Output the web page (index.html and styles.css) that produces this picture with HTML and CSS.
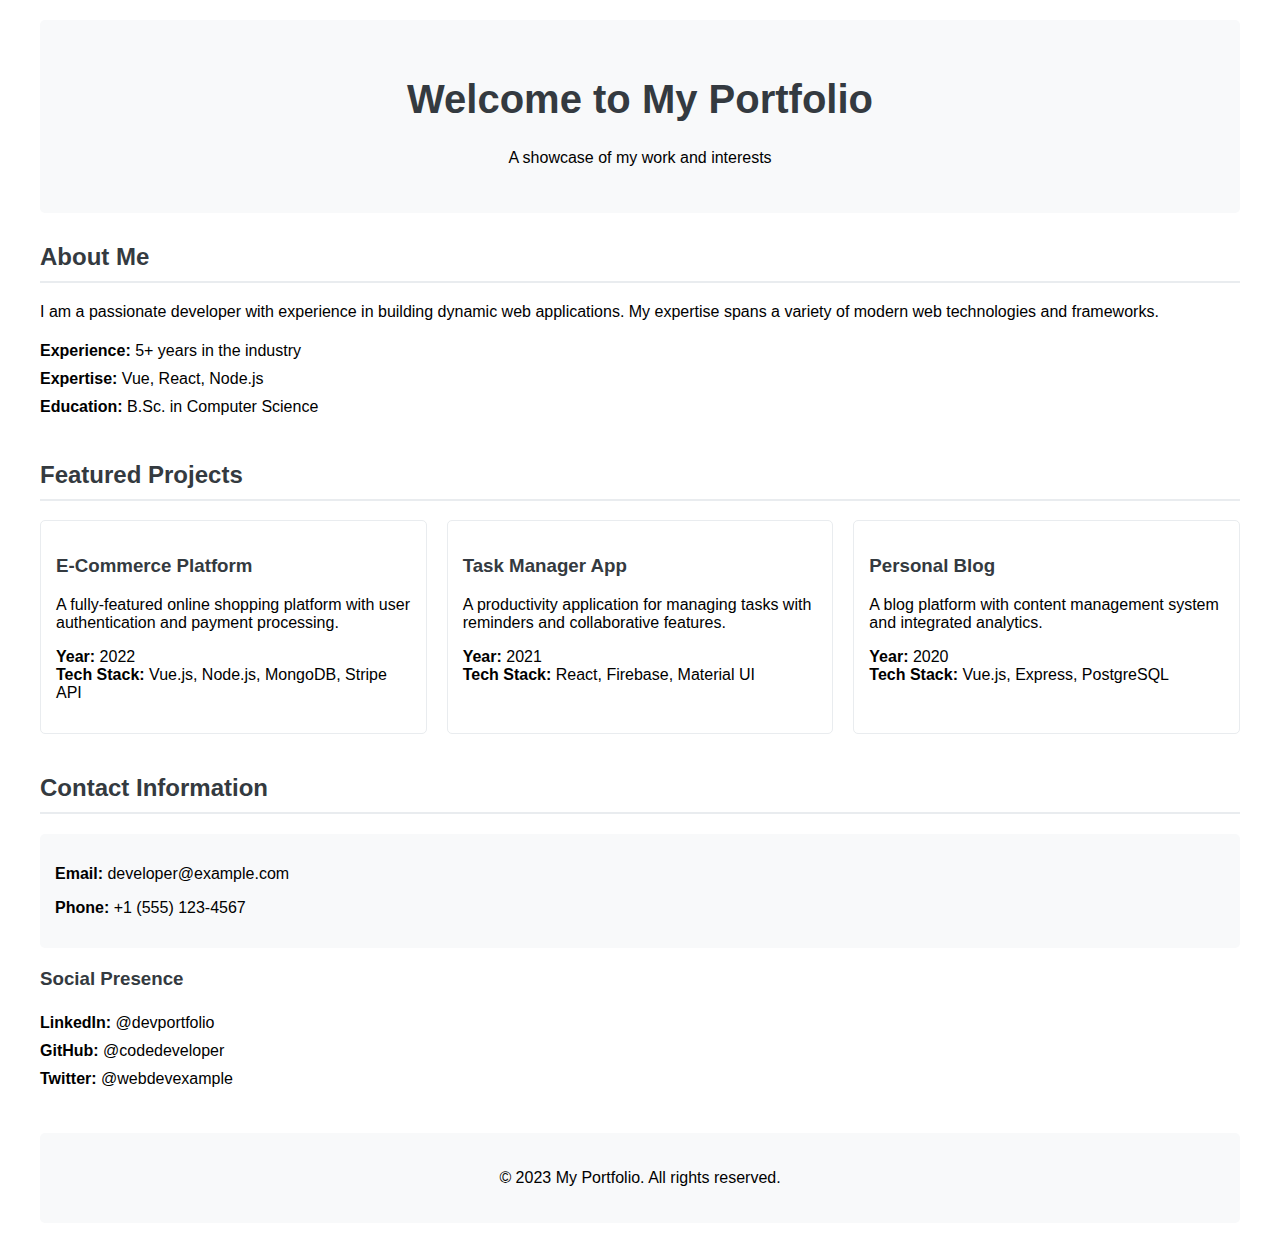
FILE: index.html
```html
<!DOCTYPE html>
<html lang="en">
<head>
<meta charset="utf-8">
<title>My Portfolio</title>
<link rel="stylesheet" href="styles.css">
</head>
<body>
<div class="container">
  <header class="hero">
    <h1>Welcome to My Portfolio</h1>
    <p>A showcase of my work and interests</p>
  </header>

  <section class="section">
    <h2 class="section-title">About Me</h2>
    <p>I am a passionate developer with experience in building dynamic web applications. My expertise spans a variety of modern web technologies and frameworks.</p>
    <ul class="info-list">
      <li><strong>Experience:</strong> 5+ years in the industry</li>
      <li><strong>Expertise:</strong> Vue, React, Node.js</li>
      <li><strong>Education:</strong> B.Sc. in Computer Science</li>
    </ul>
  </section>

  <section class="section">
    <h2 class="section-title">Featured Projects</h2>
    <div class="projects">
      <div class="card">
        <h3>E-Commerce Platform</h3>
        <p>A fully-featured online shopping platform with user authentication and payment processing.</p>
        <div class="meta">
          <div><strong>Year:</strong> 2022</div>
          <div><strong>Tech Stack:</strong> Vue.js, Node.js, MongoDB, Stripe API</div>
        </div>
      </div>
      <div class="card">
        <h3>Task Manager App</h3>
        <p>A productivity application for managing tasks with reminders and collaborative features.</p>
        <div class="meta">
          <div><strong>Year:</strong> 2021</div>
          <div><strong>Tech Stack:</strong> React, Firebase, Material UI</div>
        </div>
      </div>
      <div class="card">
        <h3>Personal Blog</h3>
        <p>A blog platform with content management system and integrated analytics.</p>
        <div class="meta">
          <div><strong>Year:</strong> 2020</div>
          <div><strong>Tech Stack:</strong> Vue.js, Express, PostgreSQL</div>
        </div>
      </div>
    </div>
  </section>

  <section class="section">
    <h2 class="section-title">Contact Information</h2>
    <div class="contact-box">
      <p><strong>Email:</strong> developer@example.com</p>
      <p><strong>Phone:</strong> +1 (555) 123-4567</p>
    </div>
    <h3 class="sub-title">Social Presence</h3>
    <ul class="info-list">
      <li><strong>LinkedIn:</strong> @devportfolio</li>
      <li><strong>GitHub:</strong> @codedeveloper</li>
      <li><strong>Twitter:</strong> @webdevexample</li>
    </ul>
  </section>

  <footer class="footer">
    <p>&copy; 2023 My Portfolio. All rights reserved.</p>
  </footer>
</div>
</body>
</html>
```
FILE: styles.css
```css
html, body {
  margin: 0;
  padding: 0;
  background: #ffffff;
}

body {
  font-family: "Liberation Sans", Arial, sans-serif;
  font-size: 16px;
  color: #000000;
}

.container {
  max-width: 1200px;
  margin: 0 auto;
  padding: 20px;
}

.hero {
  background: #f8f9fa;
  border-radius: 5px;
  padding: 30px 20px;
  text-align: center;
  margin-bottom: 30px;
}

.hero h1 {
  font-size: 40px;
  margin: 26.8px 0;
  color: #343a40;
}

.hero p {
  margin: 16px 0;
}

.section {
  margin-bottom: 40px;
}

.section-title {
  font-size: 24px;
  color: #343a40;
  margin: 19.92px 0;
  padding-bottom: 10px;
  border-bottom: 2px solid #e9ecef;
}

.section > p {
  margin: 16px 0;
}

.info-list {
  list-style: none;
  padding: 0;
  margin: 16px 0;
}

.info-list li {
  padding: 5px 0;
}

.projects {
  display: grid;
  grid-template-columns: repeat(3, 1fr);
  gap: 20px;
}

.card {
  border: 1px solid #e9ecef;
  border-radius: 5px;
  padding: 15px;
}

.card h3 {
  font-size: 18.72px;
  color: #343a40;
  margin: 18.72px 0;
}

.card p {
  margin: 16px 0;
}

.meta {
  margin: 16px 0;
}

.contact-box {
  background: #f8f9fa;
  border-radius: 5px;
  padding: 15px;
  margin-bottom: 20px;
}

.contact-box p {
  margin: 16px 0;
}

.sub-title {
  font-size: 18.72px;
  color: #343a40;
  margin: 18.72px 0 19.3px;
}

.footer {
  background: #f8f9fa;
  border-radius: 5px;
  padding: 20px;
  text-align: center;
}

.footer p {
  margin: 16px 0;
}
```
